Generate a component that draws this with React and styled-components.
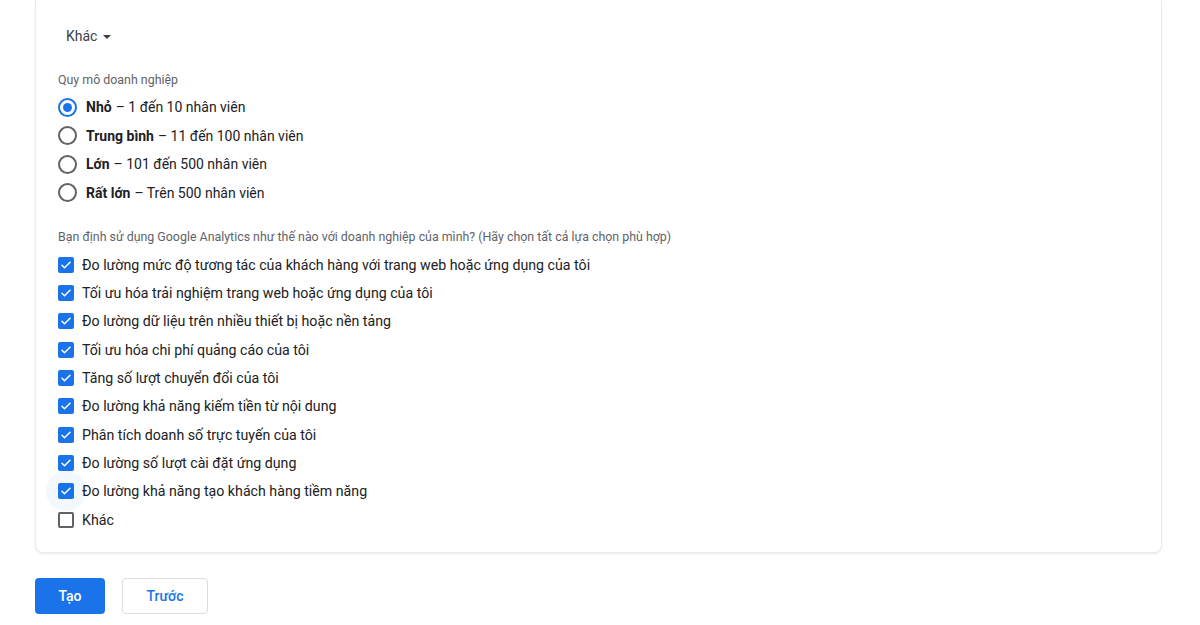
import styled, { createGlobalStyle, css } from 'styled-components';

const GlobalStyle = createGlobalStyle`
    body {
        margin: 0;
        background: #ffffff;
        font-family: Roboto, "Liberation Sans", Arial, sans-serif;
        color: #202124;
    }
`

const Page = styled.div`
    padding: 0 38px 0 35px;
`

const Card = styled.div`
    background: #ffffff;
    border: 1px solid #ececec;
    border-top: none;
    border-radius: 0 0 8px 8px;
    box-shadow: 0 1px 2px rgba(60, 64, 67, 0.12);
    padding: 22px 22px 18px 22px;
`

const Dropdown = styled.div`
    display: flex;
    align-items: center;
    gap: 6px;
    height: 28px;
    padding-left: 8px;
    font-size: 14px;
    color: #3c4043;
`

const Caret = styled.span`
    width: 0;
    height: 0;
    border-left: 4px solid transparent;
    border-right: 4px solid transparent;
    border-top: 4px solid #3c4043;
    margin-top: 1px;
`

const SectionLabel = styled.div`
    font-size: 12.4px;
    line-height: 16px;
    color: #5f6368;
    margin-top: ${(p) => p.$top}px;
    margin-bottom: ${(p) => p.$bottom}px;
`

const List = styled.div`
    display: flex;
    flex-direction: column;
`

const Row = styled.label`
    position: relative;
    display: flex;
    align-items: center;
    height: ${(p) => p.$h}px;
    font-size: ${(p) => p.$fs}px;
    color: #202124;
`

const Radio = styled.span`
    box-sizing: border-box;
    width: 19px;
    height: 19px;
    border-radius: 50%;
    border: 2px solid ${(p) => (p.$on ? '#1a73e8' : '#5f6368')};
    display: flex;
    align-items: center;
    justify-content: center;
    margin-right: 9px;
    flex-shrink: 0;
    ${(p) =>
        p.$on &&
        css`
            &::after {
                content: '';
                width: 9px;
                height: 9px;
                border-radius: 50%;
                background: #1a73e8;
            }
        `}
`

const Box = styled.span`
    position: relative;
    box-sizing: border-box;
    width: 16px;
    height: 16px;
    border-radius: 2px;
    margin-right: 8px;
    flex-shrink: 0;
    display: flex;
    align-items: center;
    justify-content: center;
    background: ${(p) => (p.$on ? '#1a73e8' : '#ffffff')};
    border: 2px solid ${(p) => (p.$on ? '#1a73e8' : '#5f6368')};
    ${(p) =>
        p.$focus &&
        css`
            &::before {
                content: '';
                position: absolute;
                left: -14px;
                top: -14px;
                width: 40px;
                height: 40px;
                border-radius: 50%;
                background: rgba(26, 115, 232, 0.05);
                z-index: 0;
            }
        `}
    svg {
        position: relative;
        z-index: 1;
    }
`

const Strong = styled.b`
    font-weight: 700;
    margin-right: 4px;
`

const Actions = styled.div`
    display: flex;
    align-items: center;
    gap: 17px;
    margin-top: 25px;
`

const Button = styled.button`
    box-sizing: border-box;
    height: 36px;
    min-width: ${(p) => p.$w}px;
    border-radius: 4px;
    font-family: Roboto, "Liberation Sans", Arial, sans-serif;
    font-size: 14px;
    font-weight: 500;
    cursor: pointer;
    ${(p) =>
        p.$primary
            ? css`
                  background: #1a73e8;
                  color: #ffffff;
                  border: none;
              `
            : css`
                  background: #ffffff;
                  color: #1a73e8;
                  border: 1px solid #dadce0;
              `}
`

const sizes = [
    ['Nhỏ', '– 1 đến 10 nhân viên', true],
    ['Trung bình', '– 11 đến 100 nhân viên', false],
    ['Lớn', '– 101 đến 500 nhân viên', false],
    ['Rất lớn', '– Trên 500 nhân viên', false],
];

const uses = [
    'Đo lường mức độ tương tác của khách hàng với trang web hoặc ứng dụng của tôi',
    'Tối ưu hóa trải nghiệm trang web hoặc ứng dụng của tôi',
    'Đo lường dữ liệu trên nhiều thiết bị hoặc nền tảng',
    'Tối ưu hóa chi phí quảng cáo của tôi',
    'Tăng số lượt chuyển đổi của tôi',
    'Đo lường khả năng kiếm tiền từ nội dung',
    'Phân tích doanh số trực tuyến của tôi',
    'Đo lường số lượt cài đặt ứng dụng',
    'Đo lường khả năng tạo khách hàng tiềm năng',
];

function Check() {
    return (
        <svg width="12" height="12" viewBox="0 0 24 24" fill="none">
            <path d="M4 12.5l5 5L20 6.5" stroke="#fff" strokeWidth="3" strokeLinecap="round" strokeLinejoin="round" />
        </svg>
    );
}

function App() {
    return (
        <Page>
            <GlobalStyle />
            <Card>
                <Dropdown>
                    Khác <Caret />
                </Dropdown>

                <SectionLabel $top={22} $bottom={5}>Quy mô doanh nghiệp</SectionLabel>
                <List>
                    {sizes.map(([name, rest, on]) => (
                        <Row key={name} $h={28.5} $fs={14}>
                            <Radio $on={on} />
                            <Strong>{name}</Strong>
                            {rest}
                        </Row>
                    ))}
                </List>

                <SectionLabel $top={22} $bottom={5.5}>
                    Bạn định sử dụng Google Analytics như thế nào với doanh nghiệp của mình? (Hãy chọn tất cả lựa chọn phù hợp)
                </SectionLabel>
                <List>
                    {uses.map((text, i) => (
                        <Row key={text} $h={28.33} $fs={14.2}>
                            <Box $on $focus={i === uses.length - 1}>
                                <Check />
                            </Box>
                            {text}
                        </Row>
                    ))}
                    <Row $h={28.33} $fs={14.2}>
                        <Box />
                        Khác
                    </Row>
                </List>
            </Card>

            <Actions>
                <Button $primary $w={70}>Tạo</Button>
                <Button $w={86}>Trước</Button>
            </Actions>
        </Page>
    );
}

export default App;
